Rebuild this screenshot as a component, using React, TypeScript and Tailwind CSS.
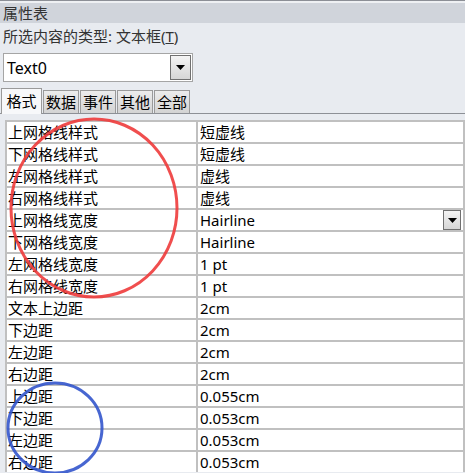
import React from "react";

const rows: [string, string][] = [
  ["上网格线样式", "短虚线"],
  ["下网格线样式", "短虚线"],
  ["左网格线样式", "虚线"],
  ["右网格线样式", "虚线"],
  ["上网格线宽度", "Hairline"],
  ["下网格线宽度", "Hairline"],
  ["左网格线宽度", "1 pt"],
  ["右网格线宽度", "1 pt"],
  ["文本上边距", "2cm"],
  ["下边距", "2cm"],
  ["左边距", "2cm"],
  ["右边距", "2cm"],
  ["上边距", "0.055cm"],
  ["下边距", "0.053cm"],
  ["左边距", "0.053cm"],
  ["右边距", "0.053cm"],
];

const tabs = ["格式", "数据", "事件", "其他", "全部"];

function DropBtn({ className }: { className: string }) {
  return (
    <div
      className={
        "flex items-center justify-center border border-[#707070] bg-gradient-to-b from-[#f4f4f4] to-[#d6d6d6] " +
        className
      }
    >
      <svg width="9" height="5" viewBox="0 0 9 5">
        <polygon points="0,0 9,0 4.5,5" fill="#000" />
      </svg>
    </div>
  );
}

export default function App() {
  return (
    <div
      className="relative w-[465px] h-[473px] overflow-hidden bg-[#e8ebf0] text-[#1a1a1a]"
      style={{ fontFamily: "'Segoe UI', 'Noto Sans', 'Noto Sans CJK SC', sans-serif" }}
    >
      <div className="h-px bg-[#8c8f96]" />
      <div className="h-[2px] bg-[#eef0f3]" />
      <div className="h-[20px] bg-[#d0d4db] px-[3px] text-[15px] leading-[20px] text-[#333]">属性表</div>
      <div className="h-[26px] px-[3px] text-[15px] leading-[26px] text-[#333]">
        所选内容的类型: 文本框(<span className="underline">T</span>)
      </div>
      <div className="mt-[4px] ml-[3px] flex h-[29px] w-[190px] items-center justify-between border border-[#a5a5a5] bg-white pl-[3px] pr-px">
        <span className="text-[16px] leading-[20px] text-black">Text0</span>
        <DropBtn className="h-[25px] w-[21px]" />
      </div>
      <div className="mt-[6px] flex h-[26px] items-end border-b border-[#8d9096] pl-[1px]">
        {tabs.map((t, i) =>
          i === 0 ? (
            <div
              key={t}
              className="relative z-10 mb-[-1px] flex h-[26px] w-[41px] items-center justify-center border border-b-0 border-[#9a9a9a] bg-[#f7f8fa] text-[15px] text-black"
            >
              {t}
            </div>
          ) : (
            <div
              key={t}
              className="ml-[1px] flex h-[23px] w-[36px] items-center justify-center border border-b-0 border-[#9a9a9a] bg-gradient-to-b from-[#ececec] to-[#d3d3d3] text-[15px] text-black"
            >
              {t}
            </div>
          )
        )}
      </div>
      <div className="mt-[6px] ml-[5px] grid w-[460px] grid-cols-[189px_265px] gap-[2px] bg-[#c0c0c0] p-[2px] pb-0">
        {rows.map(([a, b], i) => (
          <React.Fragment key={i}>
            <div className="h-[20px] bg-white pl-[1px] text-[15px] leading-[20px] text-black whitespace-nowrap">{a}</div>
            <div className="flex h-[20px] items-center justify-between bg-white pl-[2px] pr-[2px] text-[15px] leading-[20px] text-black whitespace-nowrap">
              <span>{b}</span>
              {i === 4 && <DropBtn className="h-[20px] w-[18px]" />}
            </div>
          </React.Fragment>
        ))}
      </div>
      <svg className="pointer-events-none absolute left-0 top-0" width="465" height="473">
        <ellipse cx="94" cy="208" rx="83" ry="89" fill="none" stroke="#ee3b3b" strokeWidth="3" opacity="0.9" />
        <ellipse cx="55" cy="428" rx="47" ry="45" fill="none" stroke="#3355cc" strokeWidth="3" opacity="0.9" />
      </svg>
    </div>
  );
}
